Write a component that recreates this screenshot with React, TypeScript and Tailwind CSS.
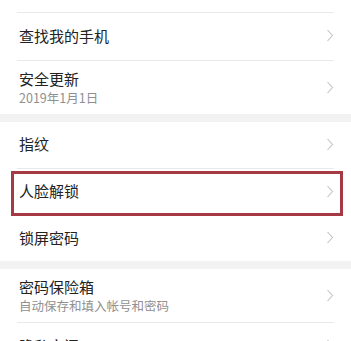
import React from "react";

const Chevron = () => (
  <svg width="8" height="13" viewBox="0 0 8 13" className="shrink-0">
    <polyline points="1.5,1 6.5,6.5 1.5,12" fill="none" stroke="#c4c4c4" strokeWidth="1.1" />
  </svg>
);

const Divider = () => <div className="mx-[17px] h-px bg-[#e9e9e9]" />;

const SimpleRow = ({ title, h }: { title: string; h: string }) => (
  <div className={`flex items-center justify-between pl-[19px] pr-[17px] pb-[2px] ${h}`}>
    <span className="text-[15px] leading-[20px] text-[#222222]">{title}</span>
    <Chevron />
  </div>
);

const TwoLineRow = ({ title, sub }: { title: string; sub: string }) => (
  <div className="flex items-center justify-between pl-[19px] pr-[17px] pt-[8px] pb-[8px]">
    <div className="flex flex-col">
      <span className="text-[15px] leading-[20px] text-[#222222]">{title}</span>
      <span className="mt-[1px] text-[12.5px] leading-[16px] text-[#909090]">{sub}</span>
    </div>
    <Chevron />
  </div>
);

const Gap = ({ h }: { h: string }) => <div className={`${h} bg-[#f2f2f2]`} />;

export default function App() {
  return (
    <div
      className="w-[351px] h-[341px] overflow-hidden bg-white"
      style={{ fontFamily: '"Noto Sans CJK SC", "Noto Sans", sans-serif' }}
    >
      <div className="h-[12px]" />
      <Divider />
      <SimpleRow title="查找我的手机" h="h-[47px]" />
      <Divider />
      <TwoLineRow title="安全更新" sub="2019年1月1日" />
      <Gap h="h-[8px]" />
      <SimpleRow title="指纹" h="h-[46px]" />
      <Divider />
      <div className="relative">
        <SimpleRow title="人脸解锁" h="h-[46px]" />
        <div className="absolute left-[11px] right-[8px] top-[2px] bottom-[-1px] border-[3px] border-[#a63a44]" />
      </div>
      <Divider />
      <SimpleRow title="锁屏密码" h="h-[45px]" />
      <Gap h="h-[8px]" />
      <TwoLineRow title="密码保险箱" sub="自动保存和填入帐号和密码" />
      <Divider />
      <SimpleRow title="隐私空间" h="h-[47px]" />
    </div>
  );
}
